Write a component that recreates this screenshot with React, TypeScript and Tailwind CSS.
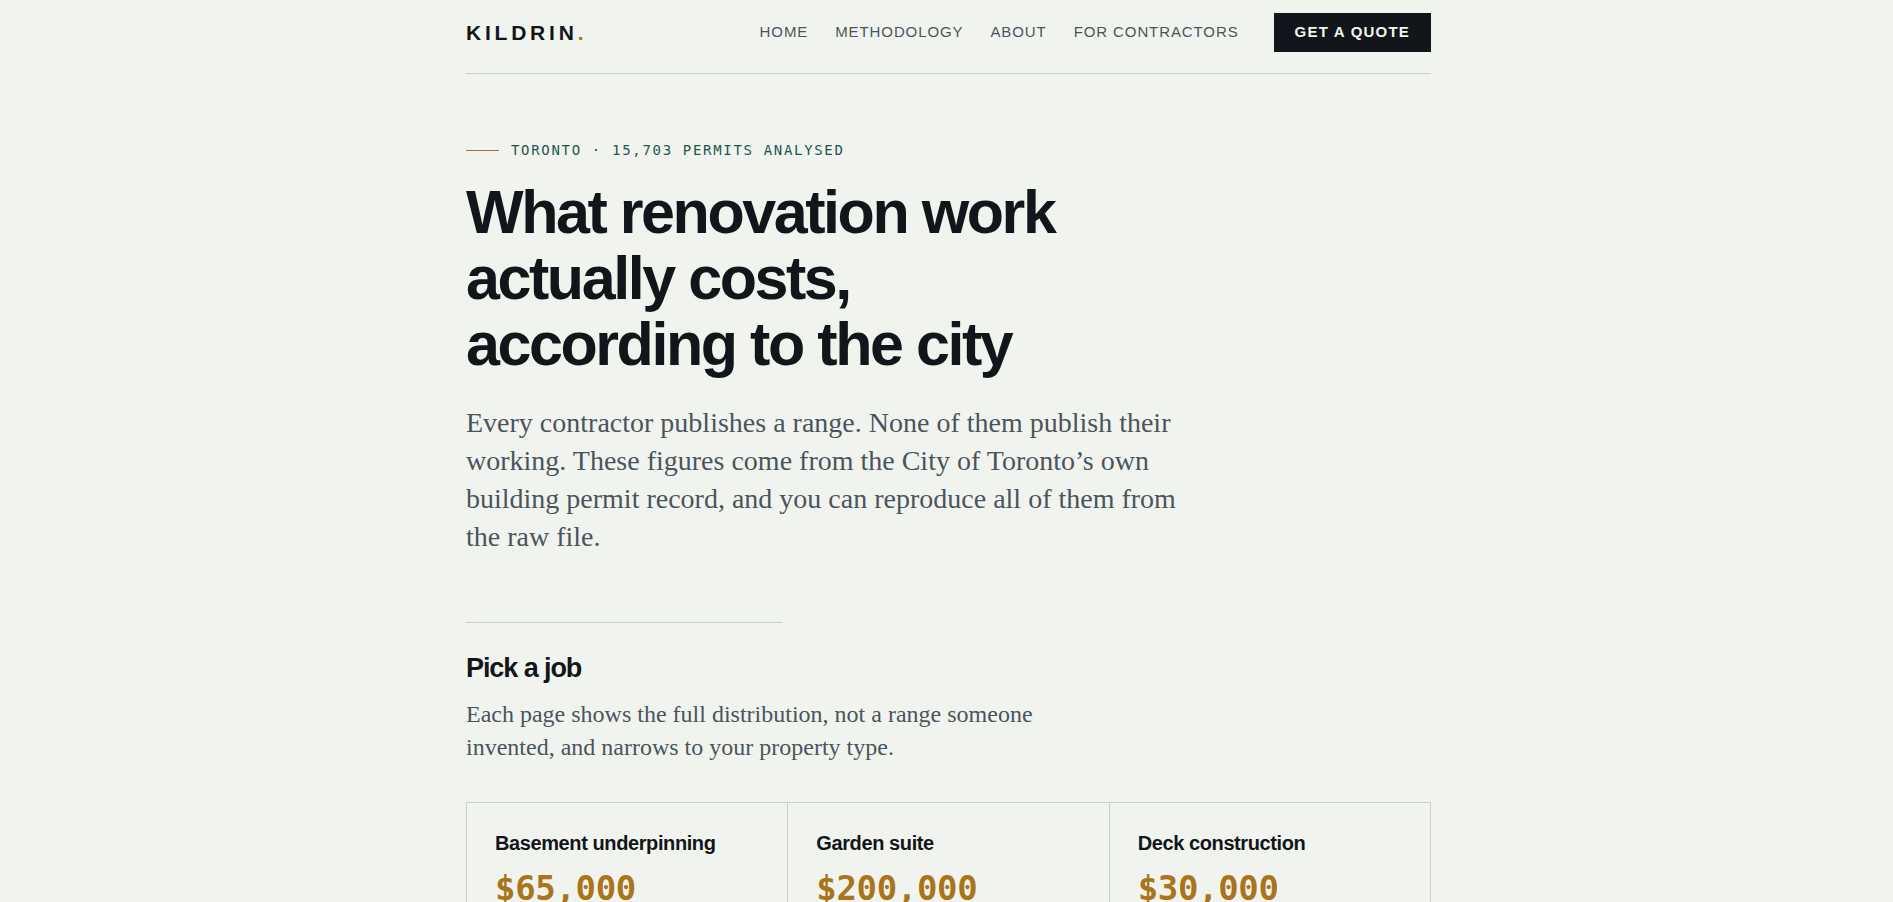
const sans = "font-['Liberation_Sans',Arial,sans-serif]"
const serif = "font-['Liberation_Serif',Georgia,serif]"
const mono = "font-['DejaVu_Sans_Mono',monospace]"

const navLinks = [
  { label: "Home", href: "#home" },
  { label: "Methodology", href: "#methodology" },
  { label: "About", href: "#about" },
  { label: "For contractors", href: "#contractors" },
]

const jobs = [
  { name: "Basement underpinning", price: "$65,000" },
  { name: "Garden suite", price: "$200,000" },
  { name: "Deck construction", price: "$30,000" },
]

function Header() {
  return (
    <header className={`${sans} flex items-center justify-between border-b border-[#cbd0ca] pt-[13px] pb-[21px]`}>
      <a href="#home" className="text-[21px] leading-6 font-bold tracking-[0.18em] text-[#12161b]">
        KILDRIN<span className="text-[#a9741c]">.</span>
      </a>
      <nav className="flex items-center gap-[27px] text-[15px] leading-[23px] tracking-[0.06em] text-[#4b545d] uppercase">
        {navLinks.map((link) => (
          <a key={link.label} href={link.href} className="pb-0.5">
            {link.label}
          </a>
        ))}
        <a href="#quote" className="ml-2 bg-[#12161b] px-[21px] pt-[7px] pb-[9px] font-bold tracking-[0.08em] text-[#f2f4ef]">
          Get a quote
        </a>
      </nav>
    </header>
  )
}

function Hero() {
  return (
    <section className="pt-16">
      <p className={`${mono} flex items-center gap-3 text-sm leading-[25px] tracking-[0.12em] text-[#1c5752] uppercase`}>
        <span className="h-px w-[33px] bg-[#a9741c]" />
        Toronto · 15,703 permits analysed
      </p>
      <h1 className={`${sans} mt-4 text-[61px] leading-[66px] font-bold tracking-[-0.04em] text-[#12161b]`}>
        What renovation work
        <br />
        actually costs,
        <br />
        according to the city
      </h1>
      <p className={`${serif} mt-[27px] max-w-[730px] text-[28px] leading-[38px] text-[#4b545d]`}>
        Every contractor publishes a range. None of them publish their working. These figures come from the City of
        Toronto’s own building permit record, and you can reproduce all of them from the raw file.
      </p>
    </section>
  )
}

function JobPicker() {
  return (
    <section className="pt-[66px] pb-16">
      <hr className="w-[316px] border-[#cbd0ca]" />
      <h2 className={`${sans} mt-[29px] text-[27px] leading-8 font-bold tracking-[-0.04em] text-[#12161b]`}>
        Pick a job
      </h2>
      <p className={`${serif} mt-[14px] max-w-[580px] text-2xl leading-[33px] text-[#4b545d]`}>
        Each page shows the full distribution, not a range someone invented, and narrows to your property type.
      </p>
      <ul className="mt-[38px] grid grid-cols-3 border-t border-l border-[#cbd0ca]">
        {jobs.map((job) => (
          <li key={job.name} className="border-r border-b border-[#cbd0ca]">
            <a href="#job" className="block px-7 pt-[26px] pb-8">
              <h3 className={`${sans} text-xl leading-7 font-bold tracking-[-0.02em] text-[#12161b]`}>{job.name}</h3>
              <p className={`${mono} mt-[11px] text-[34px] leading-10 font-bold tracking-[-0.01em] text-[#a9741c]`}>
                {job.price}
              </p>
            </a>
          </li>
        ))}
      </ul>
    </section>
  )
}

export default function App() {
  return (
    <div className="min-h-screen bg-[#f1f4ee]">
      <div className="mx-auto max-w-[969px] pl-1">
        <Header />
        <main>
          <Hero />
          <JobPicker />
        </main>
      </div>
    </div>
  )
}
